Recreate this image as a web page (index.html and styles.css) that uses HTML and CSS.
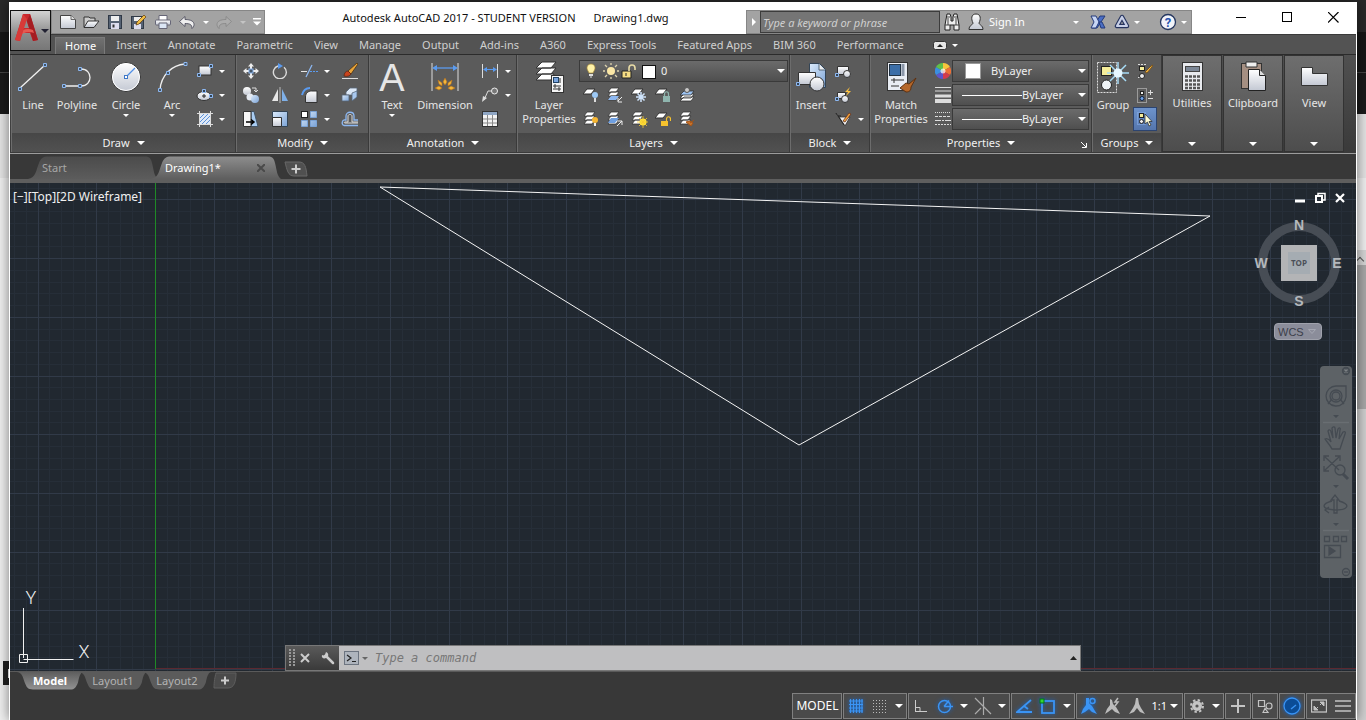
FILE: index.html
```html
<!DOCTYPE html>
<html lang="en">
<head>
    <meta charset="UTF-8">
    <meta name="viewport" content="width=device-width, initial-scale=1.0">
    <title>Autodesk AutoCAD 2017 - STUDENT VERSION</title>
    <link rel="stylesheet" href="styles.css">
</head>
<body>
    <!-- shared gradients and repeated shapes -->
    <svg class="defs" aria-hidden="true">
        <defs>
            <linearGradient id="metal" x1="0" y1="0" x2="0" y2="1">
                <stop offset="0" stop-color="#ffffff"/>
                <stop offset="1" stop-color="#c3c8d3"/>
            </linearGradient>
            <linearGradient id="blue" x1="0" y1="0" x2="1" y2="1">
                <stop offset="0" stop-color="#dcebfb"/>
                <stop offset="1" stop-color="#7ba3d6"/>
            </linearGradient>
            <linearGradient id="tabOff" x1="0" y1="0" x2="0" y2="1">
                <stop offset="0" stop-color="#4b4b4b"/>
                <stop offset="1" stop-color="#5c5c5c"/>
            </linearGradient>
            <linearGradient id="tabOn" x1="0" y1="0" x2="0" y2="1">
                <stop offset="0" stop-color="#8d8d8d"/>
                <stop offset="1" stop-color="#5e5e5e"/>
            </linearGradient>
            <linearGradient id="sheetOn" x1="0" y1="0" x2="0" y2="1">
                <stop offset="0" stop-color="#5e5e5e"/>
                <stop offset="1" stop-color="#929292"/>
            </linearGradient>
            <g id="stack">
                <path d="M4 1h8l-3 4H1zM4 5h8l-3 4H1zM4 9h8l-3 4H1z" fill="#fff" stroke="#333" stroke-width=".8"/>
            </g>
            <symbol id="tab-shape" viewBox="0 0 130 23" preserveAspectRatio="none">
                <path d="M0 23C8 22 8 14 11 7 13 2 15 .5 20 .5H117C122 .5 123 3 124 7 126 15 126 20 130 23Z"/>
            </symbol>
            <symbol id="sheet-shape" viewBox="0 0 66 19" preserveAspectRatio="none">
                <path d="M0 0C6 1 6 7 8 12 10 17 11 18.500 16 18.500H53C58 18.500 59 16 61 11 62 6 63 1 66 0Z"/>
            </symbol>
        </defs>
    </svg>

    <div class="desktop-scroll"><span class="scroll-up"></span></div>
    <div class="desktop-item"></div>

    <div class="app">
        <button class="app-menu" aria-label="Application menu">
            <svg width="24" height="28" viewBox="0 0 24 28">
                <path d="M8 0h7l8 26-5 1-3-8H7l-2 8-5-1z" fill="#c9282d"/>
                <path d="M11 5l3 9H8z" fill="#8e8e8e"/>
                <path d="M15 0l8 26-5 1-6-20z" fill="#a51d22"/>
                <path d="M2 20c5-5 11-6 16-4l1 3c-6-2-10-1-16 4z" fill="#e55a52"/>
                <path d="M8 0L0 26l5 1 7-22z" fill="#d83a38"/>
            </svg>
            <span class="caret caret-dark"></span>
        </button>

        <header class="titlebar">
            <div class="quick-access">
                <button class="icon-btn" aria-label="New"><svg width="16" height="14" viewBox="0 0 16 14"><path d="M.5.500H11l4.500 4v9H.5z" fill="url(#metal)" stroke="#444"/><path d="M11 .500v4h4.500" fill="#ddd" stroke="#666"/></svg></button>
                <button class="icon-btn" aria-label="Open"><svg width="17" height="14" viewBox="0 0 17 14"><path d="M1 12V2h5l1 1h5v3" fill="#ccc" stroke="#333"/><path d="M1 12.500L5 6h11l-5 6.500z" fill="url(#metal)" stroke="#333"/></svg></button>
                <button class="icon-btn" aria-label="Save"><svg width="14" height="14" viewBox="0 0 14 14"><rect x=".5" y=".5" width="13" height="13" fill="#566273" stroke="#303946"/><rect x="3" y="1" width="8" height="5" fill="#eee"/><rect x="3" y="8" width="8" height="6" fill="#dde"/><rect x="4.500" y="9.500" width="2" height="3" fill="#333"/></svg></button>
                <button class="icon-btn" aria-label="Save as"><svg width="16" height="14" viewBox="0 0 16 14"><rect x=".5" y="1.500" width="12" height="12" fill="#566273" stroke="#303946"/><rect x="3" y="2" width="7" height="4" fill="#eee"/><rect x="3" y="9" width="7" height="5" fill="#dde"/><path d="M5 10l1-3 7-7 2 2-7 7z" fill="#f0bd45" stroke="#5b3a0e" stroke-width=".7"/></svg></button>
                <button class="icon-btn" aria-label="Plot"><svg width="16" height="14" viewBox="0 0 16 14"><path d="M4 5V.5h8V5" fill="#fff" stroke="#667"/><rect x=".5" y="5" width="15" height="5" rx="1" fill="url(#metal)" stroke="#667"/><path d="M4 8h8v5.500H4z" fill="#dbe6f5" stroke="#667"/></svg></button>
                <button class="icon-btn" aria-label="Undo"><svg width="16" height="13" viewBox="0 0 16 13"><path d="M6 .5v3c6 0 9 2 9 5 0 2-1 3-2 4 0-4-2-5-7-5v3L.5 5.500z" fill="#eee" stroke="#445" stroke-width=".8"/></svg></button>
                <button class="drop-btn" aria-label="Undo list"><span class="caret"></span></button>
                <button class="icon-btn" aria-label="Redo"><svg width="16" height="13" viewBox="0 0 16 13"><path d="M10 .5v3C4 3.500 1 5.500 1 8.500c0 2 1 3 2 4 0-4 2-5 7-5v3l5.500-5z" fill="#acacac" stroke="#858585" stroke-width=".8"/></svg></button>
                <button class="drop-btn" aria-label="Redo list"><span class="caret caret-dim"></span></button>
                <button class="drop-btn" aria-label="Customize toolbar"><svg width="8" height="8" viewBox="0 0 8 8"><path d="M0 0h8v1.500H0zM0 3.500h8L4 7.500z" fill="#fff"/></svg></button>
            </div>
            <div class="doc-title">
                <span>Autodesk AutoCAD 2017 - STUDENT VERSION</span>
                <span>Drawing1.dwg</span>
            </div>
            <div class="info-center">
                <button class="search-toggle" aria-label="Collapse search"><svg width="4" height="8" viewBox="0 0 4 8"><path d="M0 0l4 4-4 4z" fill="#fff"/></svg></button>
                <input class="search" type="text" placeholder="Type a keyword or phrase" aria-label="Search">
                <button class="icon-btn" aria-label="Find"><svg width="16" height="18" viewBox="0 0 16 18"><path d="M3 1h3l1 3v4h2V4l1-3h3l2 11v5h-5v-5H6v5H1v-5z" fill="#eee" stroke="#222"/><path d="M3 4h3M10 4h3M1 12h5M10 12h5M4 5v7M12 5v7" stroke="#444" fill="none"/></svg></button>
                <button class="sign-in"><svg width="16" height="18" viewBox="0 0 16 18"><path d="M5 10C3 6 3 1 8 1s5 5 3 9c0 2 4 2 4 6.500H1C1 12 5 12 5 10z" fill="url(#metal)" stroke="#333"/></svg>Sign In<span class="caret"></span></button>
                <button class="icon-btn" aria-label="Exchange"><svg width="16" height="16" viewBox="0 0 16 16"><path d="M15 2h-5L2 14h5z" fill="#4a6ec4" stroke="#243a7a"/><path d="M1 2h5l3 6-3 6H1l3-6z" fill="#c8d6f4" stroke="#243a7a"/><path d="M9 8l2 6h4l-3-6z" fill="#4a6ec4" stroke="#243a7a"/></svg></button>
                <button class="icon-btn" aria-label="Stay connected"><svg width="16" height="16" viewBox="0 0 16 16"><path d="M8 3L3 12h10z" fill="none" stroke="#26345f" stroke-width="4.500" stroke-linejoin="round"/><path d="M8 3L3 12h10z" fill="none" stroke="#c7cfe6" stroke-width="2.200" stroke-linejoin="round"/></svg></button>
                <button class="drop-btn" aria-label="Stay connected list"><span class="caret"></span></button>
                <button class="help" aria-label="Help"><svg width="18" height="18" viewBox="0 0 18 18"><circle cx="9" cy="9" r="7.500" fill="#f2f4fa" stroke="#24365f" stroke-width="1.300"/><text x="9" y="13.500" text-anchor="middle" class="help-mark">?</text></svg></button>
                <button class="drop-btn" aria-label="Help list"><span class="caret"></span></button>
            </div>
            <div class="window-controls">
                <button aria-label="Minimize"><svg width="10" height="10" viewBox="0 0 10 10"><path d="M0 5.500h10" stroke="#000"/></svg></button>
                <button aria-label="Maximize"><svg width="11" height="11" viewBox="0 0 11 11"><rect x=".5" y=".5" width="9" height="9" fill="none" stroke="#000"/></svg></button>
                <button aria-label="Close"><svg width="11" height="11" viewBox="0 0 11 11"><path d="M0 0l10.500 10.500M10.500 0L0 10.500" stroke="#000" stroke-width="1.200"/></svg></button>
            </div>
        </header>

        <nav class="ribbon-tabs">
            <a href="#" class="active">Home</a>
            <a href="#">Insert</a>
            <a href="#">Annotate</a>
            <a href="#">Parametric</a>
            <a href="#">View</a>
            <a href="#">Manage</a>
            <a href="#">Output</a>
            <a href="#">Add-ins</a>
            <a href="#">A360</a>
            <a href="#">Express Tools</a>
            <a href="#">Featured Apps</a>
            <a href="#">BIM 360</a>
            <a href="#">Performance</a>
            <button class="ribbon-min" aria-label="Minimize ribbon"><svg width="14" height="9" viewBox="0 0 14 9"><rect x=".5" y=".5" width="13" height="8" rx="2" fill="#e6e6e6" stroke="#333"/><path d="M4 6l3-3 3 3z" fill="#222"/></svg><span class="caret"></span></button>
        </nav>

        <div class="ribbon">
            <section class="panel panel-draw">
                <div class="panel-body">
                    <button class="big-btn w-line"><svg width="32" height="32" viewBox="0 0 32 32"><path d="M3 27L28 4" stroke="#f2f2f2" stroke-width="1.300"/><path d="M1.500 26.500h3v3h-3zM26.500 2.500h3v3h-3z" fill="#456" stroke="#8db8f2"/></svg>Line</button>
                    <button class="big-btn w-poly"><svg width="32" height="32" viewBox="0 0 32 32"><path d="M3 25h17c12 0 12-17 0-17" fill="none" stroke="#eee" stroke-width="1.300"/><path d="M1.500 23.500h3v3h-3zM17.500 23.500h3v3h-3zM17.500 6.500h3v3h-3z" fill="#456" stroke="#8db8f2"/></svg>Polyline</button>
                    <button class="big-btn w-circle"><svg width="32" height="32" viewBox="0 0 32 32"><circle cx="16" cy="16" r="14.500" fill="url(#metal)" stroke="#333"/><circle cx="16" cy="16" r="13.500" fill="none" stroke="#fff"/><path d="M16 16l9-9" stroke="#4f8fe6" stroke-width="1.300"/><rect x="14.500" y="14.500" width="3" height="3" fill="#fff" stroke="#3f78c8"/></svg>Circle<span class="caret"></span></button>
                    <button class="big-btn w-arc"><svg width="32" height="32" viewBox="0 0 32 32"><path d="M4 29C5 14 16 4 29 3" fill="none" stroke="#eee" stroke-width="1.300"/><path d="M2.500 27.500h3v3h-3zM10.500 10.500h3v3h-3zM28 1.500h3v3h-3z" fill="#456" stroke="#8db8f2"/></svg>Arc<span class="caret"></span></button>
                    <div class="tool-col">
                        <button class="tool split" aria-label="Rectangle"><svg width="18" height="16" viewBox="0 0 18 16"><rect x="3" y="3" width="12" height="9" fill="url(#metal)" stroke="#333"/><path d="M1.500 10.500h3v3h-3zM13.500 1.500h3v3h-3z" fill="#345" stroke="#8db8f2"/></svg><span class="caret"></span></button>
                        <button class="tool split" aria-label="Ellipse"><svg width="18" height="16" viewBox="0 0 18 16"><ellipse cx="8" cy="9" rx="7" ry="4.500" fill="url(#metal)" stroke="#333"/><path d="M6 9h4M8 7v4" stroke="#222"/><path d="M6.500 2.500h3v3h-3zM13.500 7.500h3v3h-3z" fill="#345" stroke="#8db8f2"/></svg><span class="caret"></span></button>
                        <button class="tool split" aria-label="Hatch"><svg width="18" height="16" viewBox="0 0 18 16"><rect x="4" y="3" width="10" height="10" fill="#dfe9f7"/><path d="M4 7l4-4M4 11l8-8M6 13l8-8M10 13l4-4" stroke="#5e92d8"/><path d="M3.500 0v16M14.500 0v16M1 2.500h16M1 13.500h16" stroke="#ddd"/></svg><span class="caret"></span></button>
                    </div>
                </div>
                <button class="panel-title">Draw<span class="caret caret-lg"></span></button>
            </section>

            <section class="panel panel-modify">
                <div class="panel-body">
                    <div class="tool-grid">
                        <button class="tool" aria-label="Move"><svg width="16" height="16" viewBox="0 0 16 16"><path d="M8 0l3 3.500H9V6H7V3.500H5zM8 16l3-3.500H9V10H7v2.500H5zM0 8l3.500-3v2H6v2H3.500v2zM16 8l-3.500-3v2H10v2h2.500v2z" fill="#eee"/><rect x="6" y="6" width="4" height="4" fill="#456" stroke="#8db8f2"/></svg></button>
                        <button class="tool" aria-label="Rotate"><svg width="16" height="16" viewBox="0 0 16 16"><path d="M6 3a6.500 6.500 0 1 0 6 1.200" fill="none" stroke="#ddd" stroke-width="1.400"/><path d="M6 0l5 3-5 3z" fill="#5b9bef"/></svg></button>
                        <button class="tool split" aria-label="Trim"><svg width="18" height="16" viewBox="0 0 18 16"><path d="M0 8.500h6" stroke="#e6e6e6"/><path d="M9 8.500h2M12 8.500h2M15 8.500h2" stroke="#5b9bef"/><path d="M5 14l6-12" stroke="#8db8f2" stroke-width="1.200"/></svg><span class="caret"></span></button>
                        <button class="tool" aria-label="Erase"><svg width="18" height="16" viewBox="0 0 18 16"><path d="M1 15.500h16" stroke="#ddd"/><path d="M7 8l9-8 1 1-7 10z" fill="#e9a43a" stroke="#402808" stroke-width=".7"/><path d="M3 13c0-3 2-5 4-5l3 3c-1 2-4 3-7 2z" fill="#c9441d" stroke="#521" stroke-width=".7"/></svg></button>
                        <button class="tool" aria-label="Copy"><svg width="18" height="18" viewBox="0 0 18 18"><circle cx="5" cy="5" r="4" fill="url(#metal)"/><circle cx="8" cy="11" r="3.500" fill="#e5eaf2"/><circle cx="13" cy="13" r="4" fill="url(#blue)"/><path d="M10 2h4v4M12 4l2 2 2-2" fill="none" stroke="#ddd"/></svg></button>
                        <button class="tool" aria-label="Mirror"><svg width="16" height="16" viewBox="0 0 16 16"><path d="M6 2v12H0z" fill="#e8e8e8"/><path d="M10 2v12h6z" fill="#7fb0e8"/><path d="M8 0v16" stroke="#bbb"/></svg></button>
                        <button class="tool split" aria-label="Fillet"><svg width="18" height="16" viewBox="0 0 18 16"><path d="M1 8C2 4 5 1 9 1" fill="none" stroke="#5b9bef" stroke-width="2"/><path d="M4.500 15.500V10c0-4 3-6 6-6h5.500v11.500z" fill="url(#metal)" stroke="#333"/></svg><span class="caret"></span></button>
                        <button class="tool" aria-label="Explode"><svg width="18" height="16" viewBox="0 0 18 16"><path d="M5 5l4-4h7v4l-3 3H5z" fill="#dce8f7" stroke="#567" stroke-width=".8"/><path d="M1 8h7v6H1z" fill="url(#blue)" stroke="#567" stroke-width=".8"/><path d="M11 6l5-2v6l-5 4z" fill="#a9c8ee" stroke="#567" stroke-width=".8"/></svg></button>
                        <button class="tool" aria-label="Stretch"><svg width="18" height="16" viewBox="0 0 18 16"><path d="M9 .500h3l4 15H9z" fill="#a9ccf2" stroke="#456"/><path d="M1.500.500H9v15H1.500z" fill="#f6f6f6" stroke="#333"/><path d="M4 11h7M9 8.500l3 2.500-3 2.500" fill="none" stroke="#000" stroke-width="1.500"/></svg></button>
                        <button class="tool" aria-label="Scale"><svg width="16" height="16" viewBox="0 0 16 16"><path d="M.5.500h15v15H.5z" fill="url(#blue)" stroke="#345"/><path d="M.5 6.500h9v9h-9z" fill="url(#metal)" stroke="#333"/></svg></button>
                        <button class="tool split" aria-label="Array"><svg width="16" height="16" viewBox="0 0 16 16"><rect x=".5" y=".5" width="6" height="6" fill="#fff" stroke="#222"/><path d="M9.500.500h6v6h-6zM.5 9.500h6v6h-6zM9.500 9.500h6v6h-6z" fill="url(#blue)" stroke="#7ba3d6"/></svg><span class="caret"></span></button>
                        <button class="tool" aria-label="Offset"><svg width="18" height="16" viewBox="0 0 18 16"><path d="M17 14.500H3c-3-1-2-6 1-5.500h1V5c0-5 8-5 8 0v4h4" fill="none" stroke="#8db8f2" stroke-width="1.300"/><path d="M17 12H4c-1 0-1-1 0-1h3V5c0-2 4-2 4 0v6h6" fill="none" stroke="#ddd"/></svg></button>
                    </div>
                </div>
                <button class="panel-title">Modify<span class="caret caret-lg"></span></button>
            </section>

            <section class="panel panel-annotation">
                <div class="panel-body">
                    <button class="big-btn w-text"><svg class="letter" width="32" height="32" viewBox="0 0 32 32"><text x="16" y="30" text-anchor="middle" class="text-glyph">A</text></svg>Text<span class="caret"></span></button>
                    <button class="big-btn w-dim"><svg width="32" height="32" viewBox="0 0 32 32"><path d="M3 2v28M29 2v28" stroke="#ddd"/><path d="M5 7h22" stroke="#5b9bef" stroke-width="1.300"/><path d="M3 7l5-3v6zM29 7l-5-3v6z" fill="#5b9bef"/><path d="M16 17l2 4-2 3-2-3zM9 19l4 3v3l-3-2zM23 19l-4 3v3l3-2zM6 27l4-2 3 2-3 2zM26 27l-4-2-3 2 3 2z" fill="#f4b73a" stroke="#b8701b" stroke-width=".6"/></svg>Dimension</button>
                    <div class="tool-col">
                        <button class="tool split" aria-label="Linear"><svg width="16" height="16" viewBox="0 0 16 16"><path d="M.5 1v14M15.500 1v14" stroke="#ddd"/><path d="M2 6.500h12" stroke="#5b9bef"/><path d="M1 6.500l4-2.500v5zM15 6.500L11 4v5z" fill="#5b9bef"/></svg><span class="caret"></span></button>
                        <button class="tool split" aria-label="Leader"><svg width="16" height="16" viewBox="0 0 16 16"><circle cx="12.500" cy="4" r="3" fill="#777" stroke="#eee"/><path d="M10 4H6L2 13" fill="none" stroke="#ddd"/><path d="M0 15l1-6 4 2z" fill="#ddd"/></svg><span class="caret"></span></button>
                        <button class="tool" aria-label="Table"><svg width="16" height="16" viewBox="0 0 16 16"><rect x=".5" y=".5" width="15" height="15" fill="#f3f3f3" stroke="#333"/><path d="M1 1h14v3H1z" fill="#8fa6c4"/><path d="M1 8h14M1 12h14M5.500 4v11M10.500 4v11" stroke="#888"/></svg></button>
                    </div>
                </div>
                <button class="panel-title">Annotation<span class="caret caret-lg"></span></button>
            </section>

            <section class="panel panel-layers">
                <div class="panel-body">
                    <button class="big-btn w-wide"><svg width="32" height="32" viewBox="0 0 32 32"><path d="M9 1h14l-5 6H3zM9 7h14l-5 6H3zM9 13h12l-3 6H3z" fill="#fff" stroke="#333"/><rect x="18.500" y="14.500" width="12" height="17" fill="#f5f5f5" stroke="#333"/><rect x="20.500" y="16.500" width="5" height="5" fill="#7aa5df" stroke="#246"/><path d="M27 17v5M20 25h8M20 28h8M22 23v4M26 26v4" stroke="#333"/></svg>Layer<br>Properties</button>
                    <div class="layer-tools">
                        <div class="combo">
                            <svg width="72" height="18" viewBox="0 0 72 18">
                                <path d="M7 2c4 0 5 4 3 7l-1 2H5L4 9C2 6 3 2 7 2z" fill="#fff2a8" stroke="#a78a3a" stroke-width=".7"/><path d="M5 12h4v2H5z" fill="#ddd"/><path d="M7 14v2" stroke="#ddd"/>
                                <circle cx="27" cy="9" r="4" fill="#fbe7a6"/><path d="M27 1v2M27 15v2M19 9h2M33 9h2M21 3l2 2M33 3l-2 2M21 15l2-2M33 15l-2-2" stroke="#ddd3ae" stroke-width="1.300"/>
                                <path d="M38 9h9v7h-9z" fill="#f6dd84" stroke="#222"/><path d="M45 9V6c0-4 6-4 6 0v2" fill="none" stroke="#e8dba6" stroke-width="1.600"/><path d="M42 11v3" stroke="#222"/>
                                <rect x="58.500" y="3.500" width="13" height="13" fill="#fff" stroke="#111"/>
                            </svg>
                            <select aria-label="Current layer"><option>0</option></select>
                            <span class="caret caret-lg"></span>
                        </div>
                        <div class="tool-row">
                            <button class="tool" aria-label="Layer off"><svg width="16" height="16" viewBox="0 0 16 16"><path d="M4 2h8L8 7H0z" fill="#fff" stroke="#333"/><circle cx="12" cy="8" r="3" fill="#9dc9f5"/><path d="M11 11h2v4h-2z" fill="#ddd"/></svg></button>
                            <button class="tool" aria-label="Isolate"><svg width="16" height="16" viewBox="0 0 16 16"><use href="#stack"/><path d="M4 9h8l-3 4H1z" fill="#8db8f2"/><path d="M15 10l-4 4M11 11v4h4" fill="none" stroke="#eee"/></svg></button>
                            <button class="tool" aria-label="Freeze"><svg width="16" height="16" viewBox="0 0 16 16"><path d="M4 2h8L8 7H0z" fill="#fff" stroke="#333"/><path d="M10 5v10M5 10h10M6.500 6.500l7 7M13.500 6.500l-7 7" stroke="#cfe4fb" stroke-width="1.500"/></svg></button>
                            <button class="tool" aria-label="Lock"><svg width="16" height="16" viewBox="0 0 16 16"><path d="M4 2h8L8 7H0z" fill="#fff" stroke="#333"/><rect x="8" y="9" width="7" height="6" fill="#8fb5ae"/><path d="M9.500 9V7c0-3 4-3 4 0v2" fill="none" stroke="#8fb5ae" stroke-width="1.200"/></svg></button>
                            <button class="tool" aria-label="Make current"><svg width="16" height="16" viewBox="0 0 16 16"><path d="M5 10h10l-3 4H1zM5 7h10l-3 4H1z" fill="#fff" stroke="#333" stroke-width=".8"/><path d="M5 4h10l-3 4H1z" fill="#9cc2f0" stroke="#333" stroke-width=".8"/><circle cx="8" cy="3" r="2.500" fill="#ccc" stroke="#555"/></svg></button>
                        </div>
                        <div class="tool-row">
                            <button class="tool" aria-label="Turn all on"><svg width="16" height="16" viewBox="0 0 16 16"><use href="#stack"/><circle cx="12" cy="9" r="3" fill="#f7b733"/><path d="M11 12h2v3h-2z" fill="#eee"/></svg></button>
                            <button class="tool" aria-label="Unisolate"><svg width="16" height="16" viewBox="0 0 16 16"><use href="#stack"/><path d="M4 7h8l-4 5H1z" fill="#6f9fe0"/><path d="M10 15l5-5M11 10h4v4" fill="none" stroke="#eee"/></svg></button>
                            <button class="tool" aria-label="Thaw"><svg width="17" height="17" viewBox="0 0 17 17"><use href="#stack"/><circle cx="12" cy="11" r="3.500" fill="#fde23a"/><path d="M12 5v12M6 11h11M8 7l8 8M16 7l-8 8" stroke="#f7c92e" stroke-width=".8"/></svg></button>
                            <button class="tool" aria-label="Unlock"><svg width="16" height="16" viewBox="0 0 16 16"><path d="M4 2h8L8 7H0z" fill="#fff" stroke="#333"/><rect x="6" y="10" width="7" height="5" fill="#f6c22e"/><path d="M11.500 10V8c0-3 4-3 4 0v2" fill="none" stroke="#f6c22e" stroke-width="1.200"/></svg></button>
                            <button class="tool" aria-label="Match layer"><svg width="16" height="16" viewBox="0 0 16 16"><use href="#stack"/><path d="M15 9l-4 3M7 11l5 4 2-3-3-2z" fill="#c8742d" stroke="#a55518"/></svg></button>
                        </div>
                    </div>
                </div>
                <button class="panel-title">Layers<span class="caret caret-lg"></span></button>
            </section>

            <section class="panel panel-block">
                <div class="panel-body">
                    <button class="big-btn w-text"><svg width="32" height="32" viewBox="0 0 32 32"><path d="M14.500 2.500h10l6 6v18h-16z" fill="url(#blue)" stroke="#345"/><path d="M24 3v6h6" fill="#eee" stroke="#567"/><path d="M3.500 11.500h17v12h-17z" fill="url(#metal)" stroke="#333"/><circle cx="22" cy="23" r="7" fill="url(#metal)" stroke="#333"/><path d="M1.500 21.500h3v3h-3z" fill="#345" stroke="#8db8f2"/></svg>Insert</button>
                    <div class="tool-col">
                        <button class="tool" aria-label="Create block"><svg width="16" height="16" viewBox="0 0 16 16"><path d="M2.500 3.500h11v8h-11z" fill="url(#metal)" stroke="#333"/><circle cx="12" cy="11" r="3.500" fill="url(#metal)" stroke="#333"/><path d="M.500 10.500h3v3h-3z" fill="#345" stroke="#8db8f2"/></svg></button>
                        <button class="tool" aria-label="Block editor"><svg width="16" height="16" viewBox="0 0 16 16"><path d="M2.500 5.500h8v6h-8z" fill="url(#metal)" stroke="#333"/><circle cx="10" cy="12" r="3.500" fill="url(#metal)" stroke="#333"/><path d="M15 0l-5 5h3l-2 4 5-5h-3z" fill="#ffc340"/><path d="M.500 10.500h3v3h-3z" fill="#345" stroke="#8db8f2"/></svg></button>
                        <button class="tool split" aria-label="Edit attributes"><svg width="18" height="16" viewBox="0 0 18 16"><path d="M4 6h11l-5 9z" fill="#eee" stroke="#333" stroke-width=".8"/><path d="M1 2c1 3 3 3 5 3M3 5l6 9" fill="none" stroke="#222"/><path d="M8 10l6-8 2 1-6 8z" fill="#f0a13a" stroke="#632" stroke-width=".8"/></svg><span class="caret"></span></button>
                    </div>
                </div>
                <button class="panel-title">Block<span class="caret caret-lg"></span></button>
            </section>

            <section class="panel panel-properties">
                <div class="panel-body">
                    <button class="big-btn w-wide"><svg width="32" height="32" viewBox="0 0 32 32"><rect x="2.500" y="1.500" width="20" height="28" fill="#e9edf4" stroke="#333"/><rect x="4.500" y="3.500" width="11" height="11" fill="#3b6ea8" stroke="#234"/><path d="M18 3v12" stroke="#8a96a8" stroke-width="3"/><path d="M6 19h13M6 25h8M9 17v5" stroke="#333"/><path d="M31 17l-7 6-3-1-6 5 6 4c4 0 5-2 5-5z" fill="#b5672a" stroke="#5d3010"/></svg>Match<br>Properties</button>
                    <div class="tool-col prop-icons">
                        <span class="tool"><svg width="16" height="16" viewBox="0 0 16 16"><path d="M8 8V0a8 8 0 0 1 7 4z" fill="#f7c53c"/><path d="M8 8l7-4a8 8 0 0 1 0 8z" fill="#ee7036"/><path d="M8 8l7 4a8 8 0 0 1-7 4z" fill="#d33b4e"/><path d="M8 8v8a8 8 0 0 1-7-4z" fill="#5b55cc"/><path d="M8 8l-7 4a8 8 0 0 1 0-8z" fill="#3b8fe0"/><path d="M8 8L1 4a8 8 0 0 1 7-4z" fill="#5fbf4a"/><circle cx="8" cy="8" r="2.500" fill="#fff" opacity=".7"/></svg></span>
                        <span class="tool"><svg width="16" height="16" viewBox="0 0 16 16"><path d="M0 .5h16M0 4h16" stroke="#ddd"/><path d="M0 9h16" stroke="#ddd" stroke-width="3"/><path d="M0 14h16" stroke="#ddd" stroke-width="4"/></svg></span>
                        <span class="tool"><svg width="16" height="16" viewBox="0 0 16 16"><path d="M0 1.500h16" stroke="#ddd" stroke-dasharray="1 1"/><path d="M0 5.500h16" stroke="#ddd" stroke-dasharray="3 1"/><path d="M0 9.500h16" stroke="#ddd" stroke-dasharray="6 1 2 1"/><path d="M0 13.500h16" stroke="#ddd" stroke-dasharray="2 1"/></svg></span>
                    </div>
                    <div class="prop-combos">
                        <div class="combo"><span class="swatch"></span><select aria-label="Object color"><option>ByLayer</option></select><span class="caret caret-lg"></span></div>
                        <div class="combo"><span class="sample-line"></span><select aria-label="Lineweight"><option>ByLayer</option></select><span class="caret caret-lg"></span></div>
                        <div class="combo"><span class="sample-line"></span><select aria-label="Linetype"><option>ByLayer</option></select><span class="caret caret-lg"></span></div>
                    </div>
                </div>
                <div class="title-row">
                    <button class="panel-title">Properties<span class="caret caret-lg"></span></button>
                    <button class="launcher" aria-label="Properties palette"><svg width="6" height="6" viewBox="0 0 6 6"><path d="M0 0l5 5M5.500 1v4.500H1" fill="none" stroke="#fff"/></svg></button>
                </div>
            </section>

            <section class="panel panel-groups">
                <div class="panel-body">
                    <button class="big-btn w-text"><svg width="32" height="32" viewBox="0 0 32 32"><rect x=".5" y="1.500" width="19" height="30" fill="none" stroke="#ddd" stroke-dasharray="2 1"/><rect x="4.500" y="5.500" width="10" height="9" fill="#f5ed9a" stroke="#222"/><circle cx="9.500" cy="24" r="5" fill="#eef3f6" stroke="#222"/><path d="M21 1v22M10 12h22M13 4l16 16M29 4L13 20" stroke="#a6dcf7" stroke-width="1.500"/><circle cx="21" cy="12" r="4.500" fill="#e7f7ff"/></svg>Group</button>
                    <div class="tool-col">
                        <button class="tool" aria-label="Ungroup"><svg width="16" height="16" viewBox="0 0 16 16"><path d="M1 1.500h8M1 14.500h2" stroke="#ddd" stroke-dasharray="2 1"/><rect x="2.500" y="3.500" width="5" height="4" fill="#f5ed9a" stroke="#222"/><circle cx="5" cy="13" r="2.500" fill="#eee" stroke="#222"/><path d="M8 9l6-6 2-1-1 2-5 6z" fill="#f2b13c" stroke="#752"/></svg></button>
                        <button class="tool" aria-label="Group edit"><svg width="16" height="16" viewBox="0 0 16 16"><rect x=".5" y="1.500" width="9" height="14" fill="none" stroke="#ddd" stroke-dasharray="1 1"/><rect x="3.500" y="4.500" width="3" height="3" fill="#eee" stroke="#222"/><circle cx="5" cy="11.500" r="2" fill="#6fa5ea" stroke="#124"/><path d="M11 5.500h5M13.500 3v5M11 11.500h5" stroke="#ddd"/></svg></button>
                        <button class="tool pressed" aria-label="Group selection"><svg width="16" height="16" viewBox="0 0 16 16"><rect x=".5" y="1.500" width="8" height="12" fill="none" stroke="#8fb4ee" stroke-dasharray="1 1"/><rect x="2.500" y="2.500" width="4" height="4" fill="#f5ed9a" stroke="#222"/><circle cx="4.500" cy="10.500" r="2" fill="#eee" stroke="#222"/><path d="M8 3v10l2.500-2 1.500 4 2-1-2-3.500h3z" fill="#fffdd8" stroke="#222" stroke-width=".7"/></svg></button>
                    </div>
                </div>
                <button class="panel-title">Groups<span class="caret caret-lg"></span></button>
            </section>

            <button class="collapsed-panel"><svg width="32" height="32" viewBox="0 0 32 32"><rect x="6.500" y="1.500" width="20" height="28" fill="#e8eaee" stroke="#333"/><rect x="9.500" y="5.500" width="14" height="5" fill="#7c8796" stroke="#444"/><path d="M9 15.500h15M9 19.500h15M9 23.500h15M9 27h15" stroke="#555" stroke-width="2.500" stroke-dasharray="3 1"/></svg>Utilities<span class="caret caret-lg"></span></button>
            <button class="collapsed-panel"><svg width="32" height="32" viewBox="0 0 32 32"><rect x="4.500" y="2.500" width="20" height="25" fill="#a58f82" stroke="#333"/><path d="M9 1h11v5H9z" fill="#eee" stroke="#333"/><path d="M11.500 8.500h11l6 6v15h-17z" fill="url(#metal)" stroke="#222"/><path d="M22.500 8.500v6h6" fill="#ddd" stroke="#222"/></svg>Clipboard<span class="caret caret-lg"></span></button>
            <button class="collapsed-panel"><svg width="32" height="32" viewBox="0 0 32 32"><path d="M3.500 6.500h11v6h15v12h-26z" fill="url(#metal)" stroke="#333"/></svg>View<span class="caret caret-lg"></span></button>
        </div>

        <div class="file-tabs">
            <a href="#" class="file-tab"><svg class="tab-bg"><use href="#tab-shape" fill="url(#tabOff)"/></svg><span>Start</span></a>
            <a href="#" class="file-tab active"><svg class="tab-bg"><use href="#tab-shape" fill="url(#tabOn)"/></svg><span>Drawing1*</span><svg class="tab-close" width="8" height="8" viewBox="0 0 8 8"><path d="M0 0l8 8M8 0L0 8" stroke="#4a4a4a" stroke-width="2"/></svg></a>
            <button class="tab-add" aria-label="New drawing"><svg width="24" height="16" viewBox="0 0 24 16"><path d="M1 1h14c6 0 7 5 8 14H10C4 15 3 9 1 1z" fill="#505050" stroke="#686868"/><path d="M7.500 8h9M12 3.500v9" stroke="#ccc" stroke-width="2"/></svg></button>
        </div>

        <main class="drawing">
            <svg class="model" id="model" aria-label="Model space">
                <g id="grid"></g>
                <path d="M370 4L1200 33L789 262Z" fill="none" stroke="#f4f4f4"/>
            </svg>
            <div class="view-label">[−][Top][2D Wireframe]</div>

            <div class="view-controls">
                <button aria-label="Minimize view"><svg width="12" height="12" viewBox="0 0 12 12"><path d="M1 9h10" stroke="#fff" stroke-width="3"/></svg></button>
                <button aria-label="Restore view"><svg width="12" height="12" viewBox="0 0 12 12"><path d="M4 3V1.500h7V8H9" fill="none" stroke="#fff" stroke-width="1.500"/><rect x="2" y="4" width="6" height="6" fill="none" stroke="#fff" stroke-width="2"/></svg></button>
                <button aria-label="Close view"><svg width="12" height="12" viewBox="0 0 12 12"><path d="M2 2l8 8M10 2l-8 8" stroke="#fff" stroke-width="2.200"/></svg></button>
            </div>

            <svg class="viewcube" width="96" height="96" viewBox="0 0 96 96">
                <circle cx="48" cy="48" r="36.500" fill="none" stroke="#474d55" stroke-width="9"/>
                <rect x="30" y="30" width="36" height="36" fill="#b3b4b6"/>
                <rect x="37" y="37" width="22" height="22" fill="#a5acb2"/>
                <text x="48" y="51" class="cube-face">TOP</text>
                <text x="48" y="15" class="compass">N</text>
                <text x="48" y="91" class="compass">S</text>
                <text x="10" y="53" class="compass">W</text>
                <text x="86" y="53" class="compass">E</text>
            </svg>
            <button class="wcs">WCS<svg width="8" height="5" viewBox="0 0 8 5"><path d="M.5.500h7L4 4.500z" fill="none" stroke="#a5a7b2"/></svg></button>

            <div class="nav-bar">
                <svg width="32" height="212" viewBox="0 0 32 212" fill="none" stroke="#454b52" stroke-width="1.300">
                    <circle cx="26" cy="5" r="3.500" fill="#4b5157"/><path d="M24.500 3.500l3 3M27.500 3.500l-3 3" stroke="#7c8084"/>
                    <path d="M16 20h10v11a10 10 0 1 1-10-11z"/><circle cx="16" cy="30" r="6"/><circle cx="16" cy="30" r="4"/><path d="M8 38l4-5M24 38l-4-5"/>
                    <path d="M13 49h6l-3 3zM13 119h6l-3 3zM13 157h6l-3 3z" fill="#454b52" stroke="none"/>
                    <path d="M3 56.500h26M3 164.500h26" stroke="#696e72"/>
                    <path d="M12 83c-2-4-5-7-7-10 2-1 4 0 6 3L8 65c1-2 3-1 3 1l2 6-1-10c1-2 3-1 3 0l1 10 2-9c1-2 3-1 2 1l-1 9 4-7c2-1 3 0 2 2l-5 15z"/>
                    <path d="M5 91l14 13M19 91L5 104M4 95v-5h5M15 90h5v5M4 100v5h5"/><circle cx="20" cy="104" r="5"/><path d="M23 108l5 5" stroke-width="3"/>
                    <path d="M14 147v-13h-3l4-5 4 5h-2v13z"/><path d="M12 135c-11 3-11 8 3 9 14 0 16-6 4-9M9 141l-4 3 4 3"/>
                    <path d="M4.500 170.500h5v5h-5zM13.500 170.500h5v5h-5zM21.500 170.500h5v5h-5zM4.500 179.500h16v12h-16z"/><path d="M9 181l6 4-6 4z" fill="#454b52"/>
                    <circle cx="26" cy="206" r="3.500"/><path d="M24 206h4"/>
                </svg>
            </div>

            <svg class="ucs" width="90" height="90" viewBox="0 0 90 90">
                <path d="M13.500 27v50M13.500 78.500h50M9.500 73.500h8v8h-8z" fill="none" stroke="#f0f0f0"/>
                <text x="21" y="23" text-anchor="middle" class="axis">Y</text>
                <text x="74" y="77" text-anchor="middle" class="axis">X</text>
            </svg>

            <div class="command-line">
                <div class="command-handle">
                    <svg width="6" height="18" viewBox="0 0 6 18"><path d="M1 0v18M5 0v18" stroke="#999" stroke-width="2" stroke-dasharray="2 1"/></svg>
                    <button aria-label="Close command line"><svg width="10" height="10" viewBox="0 0 10 10"><path d="M1 1l8 8M9 1L1 9" stroke="#ccc" stroke-width="2"/></svg></button>
                    <button class="wrench" aria-label="Customize"><svg width="14" height="14" viewBox="0 0 14 14"><path d="M5 5l7 7" stroke="#ccc" stroke-width="2.500" stroke-linecap="round"/><path d="M5 1L4 3.500 2.500 4.500 1 4C0 7 3 8 5 7c3-1 3-5 0-6z" fill="#ccc"/></svg></button>
                </div>
                <button class="command-recent" aria-label="Recent commands"><svg width="15" height="14" viewBox="0 0 15 14"><rect x=".5" y=".5" width="14" height="13" fill="#aeb4bd" stroke="#6c7480"/><path d="M3 4l4 3-4 3M8 10.500h4" fill="none" stroke="#222" stroke-width="1.200"/></svg><span class="caret caret-grey"></span></button>
                <input type="text" placeholder="Type a command" aria-label="Command">
                <button class="command-history" aria-label="Command history"><svg width="7" height="4" viewBox="0 0 7 4"><path d="M0 4l3.500-4L7 4z" fill="#222"/></svg></button>
            </div>
        </main>

        <footer class="footer">
            <div class="sheet-tabs">
                <a href="#" class="sheet active"><svg class="tab-bg"><use href="#sheet-shape" fill="url(#sheetOn)"/></svg><span>Model</span></a>
                <a href="#" class="sheet"><svg class="tab-bg"><use href="#sheet-shape" fill="#5b5b5b"/></svg><span>Layout1</span></a>
                <a href="#" class="sheet"><svg class="tab-bg"><use href="#sheet-shape" fill="#5b5b5b"/></svg><span>Layout2</span></a>
                <button class="sheet-add" aria-label="New layout"><svg width="24" height="17" viewBox="0 0 24 17"><path d="M3 1h20c0 9-2 15-8 15H1C1 9 2 5 3 1z" fill="#4a4a4a" stroke="#5e5e5e"/><path d="M8 8.500h8M12 4.500v8" stroke="#ccc" stroke-width="2"/></svg></button>
            </div>

            <div class="status-bar">
                <div class="status-group"><button class="model-btn">MODEL</button></div>
                <div class="status-group">
                    <button class="status-icon" aria-label="Grid"><svg class="glow" width="16" height="16" viewBox="0 0 16 16"><path d="M2.500 1v14M5.500 1v14M8.500 1v14M11.500 1v14M14 1v14M1 3h14M1 6.500h14M1 10h14M1 13h14" stroke="#3a94f5" stroke-width="1.200"/></svg></button>
                    <button class="status-icon" aria-label="Snap"><svg width="16" height="16" viewBox="0 0 16 16"><path d="M1 2.500h14M1 5.500h14M1 8.500h14M1 11.500h14M1 14.500h14" stroke="#bbb" stroke-dasharray="1 2"/></svg></button>
                    <button class="drop-btn" aria-label="Snap list"><span class="caret caret-lg"></span></button>
                </div>
                <div class="status-group">
                    <button class="status-icon" aria-label="Ortho"><svg width="16" height="16" viewBox="0 0 16 16"><path d="M2.500 2v12M2 13.500h12M3 9.500h4v4" fill="none" stroke="#ccc"/></svg></button>
                    <button class="status-icon" aria-label="Polar"><svg class="glow" width="16" height="16" viewBox="0 0 16 16"><circle cx="7.500" cy="8.500" r="6" fill="none" stroke="#3a94f5" stroke-width="1.500"/><path d="M7 8.500h9M7 8.500l5-6" stroke="#3a94f5" stroke-width="1.500"/></svg></button>
                    <button class="drop-btn" aria-label="Polar list"><span class="caret caret-lg"></span></button>
                    <button class="status-icon" aria-label="Isometric"><svg width="18" height="18" viewBox="0 0 18 18"><path d="M1 1l16 16M9.500 0v18M1 17l6-6" stroke="#aaa" stroke-width="1.200"/></svg></button>
                    <button class="drop-btn" aria-label="Isometric list"><span class="caret caret-lg"></span></button>
                </div>
                <div class="status-group">
                    <button class="status-icon" aria-label="Object snap tracking"><svg class="glow" width="16" height="16" viewBox="0 0 16 16"><path d="M15 2L1 14h15M8 8l4 3" fill="none" stroke="#3a94f5" stroke-width="1.800"/></svg></button>
                    <button class="status-icon" aria-label="Object snap"><svg class="glow" width="18" height="18" viewBox="0 0 18 18"><rect x="3" y="4" width="12" height="12" fill="none" stroke="#3a94f5" stroke-width="1.800"/><rect x="1" y="2" width="4" height="4" fill="#35d435" stroke="#071"/></svg></button>
                    <button class="drop-btn" aria-label="Object snap list"><span class="caret caret-lg"></span></button>
                </div>
                <div class="status-group">
                    <button class="status-icon" aria-label="Annotation visibility"><svg class="glow" width="18" height="18" viewBox="0 0 18 18"><path d="M6 1h3v5l3 3 3 5 2 3-5-2-3-3-4 3-4 2 2-5 3-4z" fill="#3a94f5"/><circle cx="12.500" cy="4" r="2.500" fill="none" stroke="#3a94f5" stroke-width="1.500"/></svg></button>
                    <button class="status-icon" aria-label="Auto scale"><svg width="18" height="18" viewBox="0 0 18 18"><path d="M6 2l2 1 1 4 3 3 3 5 1 2-5-2-3-3-4 3-3 2 2-5 3-4z" fill="#bcbcbc"/><path d="M14 1l-3 4h3l-3 4" fill="none" stroke="#bcbcbc" stroke-width="1.500"/></svg></button>
                    <button class="status-icon" aria-label="Annotation scale"><svg width="18" height="18" viewBox="0 0 18 18"><path d="M8 1h2l1 6 2 4 4 6-5-2-3-4-3 4-5 2 4-6 2-4z" fill="#bcbcbc"/></svg></button>
                    <button class="scale-btn">1:1<span class="caret caret-lg"></span></button>
                </div>
                <div class="status-group">
                    <button class="status-icon" aria-label="Workspace"><svg width="14" height="14" viewBox="0 0 14 14"><circle cx="7" cy="7" r="5" fill="#c4c4c4"/><circle cx="7" cy="7" r="6" fill="none" stroke="#c4c4c4" stroke-width="2" stroke-dasharray="2.400 2.300"/><circle cx="7" cy="7" r="1.600" fill="#555"/></svg></button>
                    <button class="drop-btn" aria-label="Workspace list"><span class="caret caret-lg"></span></button>
                </div>
                <div class="status-group"><button class="status-icon" aria-label="Annotation monitor"><svg width="14" height="14" viewBox="0 0 14 14"><path d="M0 7h14M7 0v14" stroke="#c4c4c4" stroke-width="2"/></svg></button></div>
                <div class="status-group"><button class="status-icon" aria-label="Isolate objects"><svg width="16" height="16" viewBox="0 0 16 16"><path d="M1.500 2.500h6v6h-6zM6 14.500l2-4 3 4z" fill="none" stroke="#c4c4c4" stroke-width="1.200"/><circle cx="12" cy="8" r="3" fill="none" stroke="#c4c4c4" stroke-width="1.200"/></svg></button></div>
                <div class="status-group"><button class="status-icon" aria-label="Performance"><svg class="glow" width="18" height="18" viewBox="0 0 18 18"><circle cx="9" cy="9" r="8" fill="#0b4c96" stroke="#3a94f5" stroke-width="1.300"/><path d="M8 12l5-4" stroke="#3a94f5" stroke-width="1.500"/></svg></button></div>
                <div class="status-group">
                    <button class="status-icon" aria-label="Clean screen"><svg width="16" height="14" viewBox="0 0 16 14"><rect x=".5" y="1" width="15" height="12" fill="none" stroke="#c4c4c4" stroke-width="1.300"/><path d="M9 3h4v4zM7 11H3V7zM9 6l3-3M7 8l-3 3" fill="#c4c4c4" stroke="#c4c4c4"/></svg></button>
                    <button class="status-icon" aria-label="Customization"><svg width="16" height="14" viewBox="0 0 16 14"><path d="M0 2h16M0 7h16M0 12h16" stroke="#c4c4c4" stroke-width="1.500"/></svg></button>
                </div>
            </div>
        </footer>
    </div>

    <script src="script.js"></script>
</body>
</html>
```

FILE: styles.css
```css
* {
    margin: 0;
    padding: 0;
    box-sizing: border-box;
}

body {
    height: 100vh;
    padding: 2px 9px 0;
    overflow: hidden;
    background: linear-gradient(#292929 32px, #161616 32px, #161616 72px, #444 72px, #444 73px, #1a1a1a 73px, #1a1a1a 114px, #e4e4e4 114px, #e4e4e4 178px, #f0f0f0 178px);
    font-family: "Noto Sans", "Open Sans", sans-serif;
    font-size: 11px;
    line-height: 14px;
    color: #e6e6e6;
}

button, input, select {
    border: none;
    background: none;
    font: inherit;
    color: inherit;
    cursor: pointer;
}

a {
    color: inherit;
    text-decoration: none;
}

svg {
    display: block;
    flex: none;
}

.defs {
    position: absolute;
    width: 0;
    height: 0;
}

/* Windows behind the app */
.desktop-scroll {
    position: absolute;
    top: 250px;
    right: 0;
    bottom: 0;
    width: 9px;
    background: linear-gradient(#d6d6d6 15px, #a8a8a8 15px, #a8a8a8 159px, #d0d0d0 159px);
}

.scroll-up {
    position: absolute;
    top: 8px;
    left: 0;
    width: 6px;
    height: 6px;
    border-top: 1px solid #555;
    border-right: 1px solid #555;
    transform: rotate(-45deg);
}

.desktop-item {
    position: absolute;
    left: 3px;
    top: 661px;
    width: 12px;
    height: 24px;
    border: solid #222;
    border-width: 8px 0 7px 5px;
    background: #fff;
}

.app {
    position: relative;
    display: flex;
    flex-direction: column;
    height: 100%;
    border-left: 1px solid #fff;
    border-right: 1px solid #fff;
    background: #383838;
    box-shadow: 0 0 12px rgba(0, 0, 0, 0.5);
}

/* Carets */
.caret {
    flex: none;
    width: 0;
    height: 0;
    border: 3px solid transparent;
    border-top-color: #fff;
    border-bottom: none;
}

.caret-lg {
    border-width: 4px;
    border-bottom: none;
}

.caret-dark {
    border-width: 4px;
    border-top-color: #223;
    border-bottom: none;
}

.caret-grey {
    border-top-color: #666;
}

.caret-dim {
    border-top-color: #c4c4c4;
}

/* Title bar */
.app-menu {
    position: absolute;
    top: 8px;
    left: 0;
    z-index: 2;
    width: 41px;
    height: 41px;
    padding-left: 4px;
    display: flex;
    align-items: center;
    gap: 2px;
    border: 1px solid #111;
    background: linear-gradient(#d2d2d2, #8a8a8a 60%, #777);
}

.app-menu svg {
    margin-bottom: 6px;
}

.titlebar {
    display: flex;
    align-items: flex-start;
    height: 32px;
    padding-left: 41px;
    background: #fff;
    color: #111;
}

.quick-access, .info-center {
    display: flex;
    align-items: center;
    height: 24px;
    margin-top: 8px;
    border: 1px solid #868686;
    background: #a3a3a3;
}

.quick-access {
    width: 214px;
    padding-left: 4px;
}

.icon-btn {
    width: 24px;
    height: 22px;
    display: flex;
    align-items: center;
    justify-content: center;
}

.drop-btn {
    width: 14px;
    height: 22px;
    display: flex;
    align-items: center;
    justify-content: center;
}

.doc-title {
    flex: 1;
    display: flex;
    justify-content: center;
    gap: 18px;
    padding-top: 9px;
    white-space: nowrap;
}

.info-center {
    width: 446px;
    color: #fff;
}

.info-center .icon-btn + .drop-btn {
    margin-left: -4px;
}

.search-toggle {
    width: 13px;
    display: flex;
    justify-content: center;
}

.search {
    width: 180px;
    height: 22px;
    padding: 0 2px;
    border: 1px solid #3c3c3c;
    background: #757575;
    font-style: italic;
    cursor: text;
}

.search::placeholder {
    color: #d0d0d0;
}

.sign-in {
    width: 122px;
    padding: 0 0 0 4px;
    display: flex;
    align-items: center;
    gap: 5px;
}

.sign-in .caret {
    margin-left: auto;
    margin-right: 7px;
}

.help {
    margin-left: auto;
}

.help-mark {
    font: bold 13px "Roboto", sans-serif;
    fill: #2a55b0;
}

.window-controls {
    display: flex;
    margin-left: 26px;
}

.window-controls button {
    width: 46px;
    height: 30px;
    display: flex;
    align-items: center;
    justify-content: center;
}

/* Ribbon tabs */
.ribbon-tabs {
    display: flex;
    align-items: flex-end;
    gap: 1px;
    height: 20px;
    padding-left: 45px;
    border-top: 1px solid #3a3a3a;
    background: #535353;
    color: #d0d0d0;
}

.ribbon-tabs a {
    height: 17px;
    padding: 0 10px;
    line-height: 16px;
    white-space: nowrap;
}

.ribbon-tabs .active {
    padding: 0 8px 0 9px;
    border: 1px solid #7a7a7a;
    border-bottom: none;
    background: linear-gradient(#717171, #5c5c5c);
    color: #fff;
}

.ribbon-min {
    display: flex;
    align-items: center;
    gap: 5px;
    height: 17px;
    margin-left: 18px;
}

/* Ribbon */
.ribbon {
    display: flex;
    height: 100px;
    padding-left: 1px;
    border-top: 1px solid #2b2b2b;
    border-bottom: 1px solid #9c9c9c;
    background: linear-gradient(#505050, #3a3a3a);
}

.panel {
    flex: none;
    display: flex;
    flex-direction: column;
    height: 97px;
    border-left: 1px solid #6c6c6c;
    border-right: 1px solid #3a3a3a;
    background: #5b5b5b;
}

.panel-draw { width: 225px; }
.panel-modify { width: 133px; }
.panel-annotation { width: 148px; }
.panel-layers { width: 273px; }
.panel-block { width: 80px; }
.panel-properties { width: 222px; }
.panel-groups { width: 70px; }

.panel-body {
    flex: 1;
    display: flex;
    padding-top: 4px;
}

.panel-annotation .panel-body {
    padding-left: 2px;
}

.panel-layers .panel-body {
    padding-left: 1px;
}

.panel-title {
    width: 100%;
    height: 19px;
    display: flex;
    align-items: center;
    justify-content: center;
    gap: 7px;
    background: linear-gradient(#474747, #515151);
    color: #f0f0f0;
}

.title-row {
    position: relative;
}

.launcher {
    position: absolute;
    right: 4px;
    bottom: 4px;
}

.big-btn {
    flex: none;
    display: flex;
    flex-direction: column;
    align-items: center;
    padding-top: 2px;
}

.big-btn svg {
    margin-bottom: 5px;
}

.big-btn .caret {
    margin-top: 2px;
}

.letter {
    overflow: visible;
}

.w-line { width: 42px; }
.w-poly { width: 46px; }
.w-circle { width: 52px; }
.w-arc { width: 40px; }
.w-text { width: 40px; }
.w-dim { width: 66px; }
.w-wide { width: 60px; }

.text-glyph {
    font: 38px "Liberation Sans", sans-serif;
    fill: #e6e6e6;
}

.tool-col {
    display: flex;
    flex-direction: column;
}

.tool-row {
    display: flex;
}

.tool-grid {
    display: grid;
    grid-template-columns: 24px 24px 36px 24px;
    grid-auto-rows: 24px;
    column-gap: 5px;
    padding-left: 2px;
}

.tool {
    width: 24px;
    height: 24px;
    display: flex;
    align-items: center;
    justify-content: center;
}

.split {
    width: 36px;
    justify-content: space-between;
    padding: 0 3px 0 4px;
}

.pressed {
    border: 1px solid #2c4470;
    background: linear-gradient(#6d93cc, #5576ad);
}

.layer-tools, .prop-combos {
    display: flex;
    flex-direction: column;
}

.combo {
    display: flex;
    align-items: center;
    height: 22px;
    margin: 1px 0;
    padding-right: 2px;
    border: 1px solid #3a3a3a;
    background: linear-gradient(#6b6b6b, #4f4f4f);
}

.combo select {
    flex: 1;
    min-width: 0;
    appearance: none;
    color: #f0f0f0;
}

.layer-tools .combo {
    width: 209px;
    padding-left: 4px;
    gap: 5px;
}

.prop-icons {
    width: 21px;
}

.prop-combos .combo {
    width: 137px;
}

.swatch {
    width: 16px;
    height: 16px;
    margin: 0 10px 0 12px;
    border: 1px solid #999;
    background: #fff;
}

.sample-line {
    width: 60px;
    height: 1px;
    margin-left: 9px;
    background: #fff;
}

.collapsed-panel {
    flex: none;
    width: 60px;
    height: 97px;
    margin-right: 1px;
    padding: 5px 0;
    display: flex;
    flex-direction: column;
    align-items: center;
    gap: 3px;
    border: 1px solid #333;
    background: linear-gradient(#6e6e6e, #4d4d4d);
}

.collapsed-panel .caret {
    margin-top: auto;
}

/* Drawing tabs */
.file-tabs {
    display: flex;
    align-items: flex-end;
    height: 29px;
    padding-left: 18px;
    border-bottom: 4px solid #5e5e5e;
    color: #a6a6a6;
}

.file-tab, .sheet {
    position: relative;
    display: flex;
    align-items: center;
}

.file-tab {
    width: 130px;
    height: 23px;
    margin-right: -7px;
    padding: 1px 16px 0 14px;
}

.file-tab.active {
    color: #fff;
}

.tab-bg {
    position: absolute;
    inset: 0;
    width: 100%;
    height: 100%;
}

.file-tab span, .sheet span, .tab-close {
    position: relative;
}

.tab-close {
    margin-left: auto;
}

.tab-add {
    margin: 0 0 2px 10px;
}

/* Drawing area */
.drawing {
    position: relative;
    flex: 1;
    min-height: 0;
    background: #212830;
}

.model {
    width: 100%;
    height: 100%;
}

.minor { stroke: #262e38; }
.major { stroke: #313a48; }
.axis-x { stroke: #5c2930; }
.axis-y { stroke: #1f8a26; }

.view-label {
    position: absolute;
    top: 7px;
    left: 3px;
    font-size: 12px;
    color: #f0f0f0;
}

.view-controls {
    position: absolute;
    top: 9px;
    right: 10px;
    display: flex;
    gap: 8px;
}

.viewcube {
    position: absolute;
    top: 32px;
    right: 9px;
}

.compass {
    font: bold 14px "Liberation Sans", sans-serif;
    fill: #b4b8bc;
    text-anchor: middle;
}

.cube-face {
    font: bold 8px "Open Sans", sans-serif;
    fill: #4a4f57;
    text-anchor: middle;
}

.wcs {
    position: absolute;
    top: 140px;
    right: 34px;
    width: 48px;
    height: 17px;
    display: flex;
    align-items: center;
    justify-content: space-between;
    padding: 0 5px 0 3px;
    border: 1px solid #a0a2ac;
    border-radius: 4px;
    background: #8b8d9a;
    color: #3c404a;
    font-family: "Liberation Sans", sans-serif;
}

.nav-bar {
    position: absolute;
    top: 183px;
    right: 4px;
    border-radius: 4px;
    background: #5d6266;
}

.ucs {
    position: absolute;
    left: 0;
    bottom: 0;
}

.axis {
    font: 300 18px "Roboto", sans-serif;
    fill: #f0f0f0;
}

.command-line {
    position: absolute;
    left: 50%;
    bottom: 0;
    width: 796px;
    height: 26px;
    transform: translateX(-50%);
    display: flex;
    align-items: center;
    border: 1px solid #777;
    background: #bfbfc1;
}

.command-handle {
    width: 53px;
    height: 24px;
    display: flex;
    align-items: center;
    gap: 5px;
    padding: 0 4px 0 3px;
    background: linear-gradient(#5a5a5a, #3a3a3a);
}

.wrench {
    margin-left: auto;
}

.command-recent {
    display: flex;
    align-items: center;
    gap: 3px;
    padding: 0 7px 0 5px;
}

.command-line input {
    flex: 1;
    font: italic 12px "DejaVu Sans Mono", monospace;
    color: #333;
    cursor: text;
}

.command-line input::placeholder {
    color: #777;
}

.command-history {
    padding: 0 3px;
}

/* Footer */
.footer {
    flex: none;
}

.sheet-tabs {
    display: flex;
    height: 21px;
    padding-left: 7px;
    border-top: 1px solid #5a5a5a;
    color: #b4b4b4;
}

.sheet {
    width: 68px;
    height: 18px;
    margin-right: -4px;
    justify-content: center;
}

.sheet.active {
    width: 66px;
    color: #fff;
    font-weight: bold;
}

.sheet-add {
    margin-left: 6px;
    height: 17px;
}

.status-bar {
    display: flex;
    justify-content: flex-end;
    gap: 1px;
    height: 28px;
    padding-top: 1px;
}

.status-group {
    display: flex;
    align-items: center;
    height: 26px;
    border: 1px solid #808080;
    background: #4a4a4a;
}

.status-icon {
    width: 24px;
    height: 24px;
    display: flex;
    align-items: center;
    justify-content: center;
}

.model-btn {
    padding: 0 3px;
    color: #fff;
    font-size: 12px;
}

.scale-btn {
    display: flex;
    align-items: center;
    gap: 3px;
    padding: 0 4px 0 2px;
    color: #fff;
}

.glow {
    filter: drop-shadow(0 0 2px #1565c8);
}
```

FILE: script.js
```javascript
const model = document.getElementById('model');
const grid = document.getElementById('grid');

// origin and spacing of the drafting grid
const originX = 145;
const originFromBottom = 2;
const majorStep = 58.7;
const minorPerMajor = 5;

function addLine(x1, y1, x2, y2, name) {
    const line = document.createElementNS('http://www.w3.org/2000/svg', 'line');
    line.setAttribute('x1', x1);
    line.setAttribute('y1', y1);
    line.setAttribute('x2', x2);
    line.setAttribute('y2', y2);
    line.setAttribute('class', name);
    grid.appendChild(line);
}

function drawGrid() {
    const width = model.clientWidth;
    const height = model.clientHeight;
    const originY = height - originFromBottom;
    const step = majorStep / minorPerMajor;

    grid.innerHTML = '';

    ['minor', 'major'].forEach((name) => {
        for (let i = -Math.floor(originX / step); originX + i * step < width; i++) {
            if ((i % minorPerMajor === 0) === (name === 'major')) {
                const x = Math.round(originX + i * step) + 0.5;
                addLine(x, 0, x, height, name);
            }
        }
        for (let i = 0; originY - i * step > 0; i++) {
            if ((i % minorPerMajor === 0) === (name === 'major')) {
                const y = Math.round(originY - i * step) + 0.5;
                addLine(0, y, width, y, name);
            }
        }
    });

    addLine(originX, originY - 0.5, width, originY - 0.5, 'axis-x');
    addLine(originX + 0.5, 0, originX + 0.5, originY, 'axis-y');
}

window.addEventListener('resize', drawGrid);
drawGrid();
```
